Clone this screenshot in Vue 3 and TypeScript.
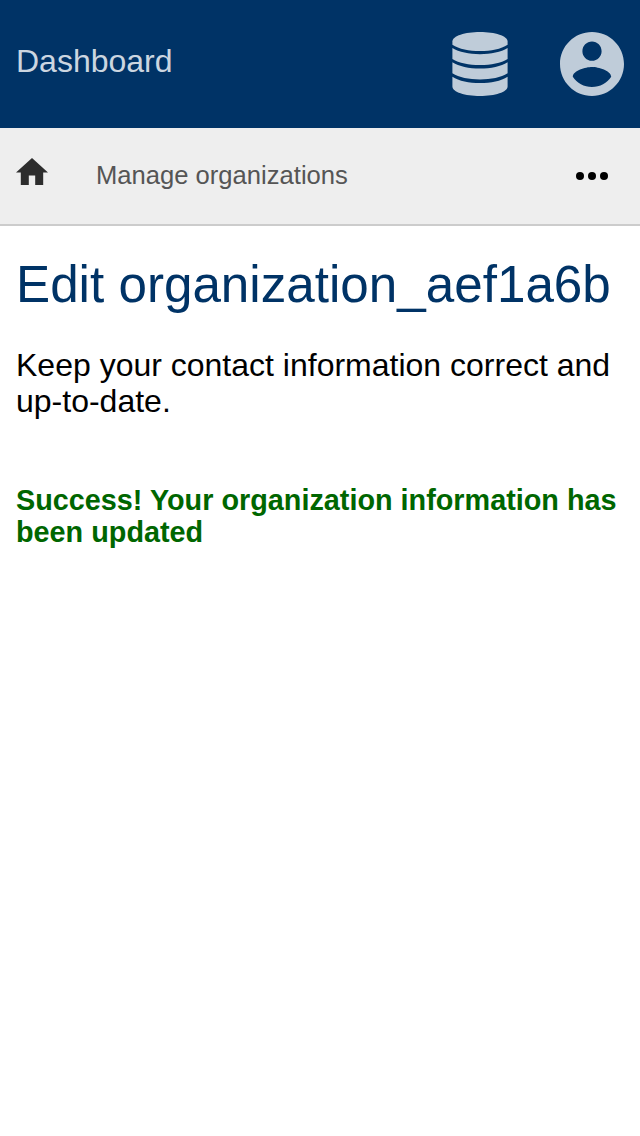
<script setup lang="ts">
const organization: string = 'organization_aef1a6b'
</script>

<template>
  <div class="page">
    <header class="topbar">
      <span class="brand">Dashboard</span>
      <svg class="database" viewBox="0 0 56 64" width="56" height="64">
        <path d="M.4 9.500C.4 4 13 0 28 0s27.600 4 27.600 9.500v3.200C49 17 39 19 28 19S7 17 .4 12.700z" />
        <path d="M.4 16C7 20 17 22.200 28 22.200S49 20 55.600 16V27C49 31 39 33 28 33S7 31 .4 27z" />
        <path d="M.4 30.300C7 34.500 17 36.600 28 36.600s21-2.100 27.600-6.300v11C49 45.500 39 47.500 28 47.500S7 45.500 .4 41.300z" />
        <path d="M.4 44.700C7 49 17 51 28 51s21-2 27.600-6.300v9.800C55.600 60 43 64 28 64S.4 60 .4 54.500z" />
      </svg>
      <svg class="account" viewBox="2 2 20 20" width="64" height="64">
        <path d="M12 2C6.480 2 2 6.480 2 12s4.480 10 10 10 10-4.480 10-10S17.520 2 12 2zm0 3c1.660 0 3 1.340 3 3s-1.340 3-3 3-3-1.340-3-3 1.340-3 3-3zm0 14.200c-2.500 0-4.710-1.280-6-3.220.030-1.990 4-3.080 6-3.080 1.990 0 5.970 1.090 6 3.080-1.290 1.940-3.500 3.220-6 3.220z" />
      </svg>
    </header>
    <nav class="subnav">
      <svg class="home" viewBox="2 3 20 17" width="32" height="27.200"><path d="M10 20v-6h4v6h5v-8h3L12 3 2 12h3v8z" /></svg>
      <span class="crumb">Manage organizations</span>
      <svg class="more" viewBox="0 0 32 8" width="32" height="8"><circle cx="4" cy="4" r="4" /><circle cx="16" cy="4" r="4" /><circle cx="28" cy="4" r="4" /></svg>
    </nav>
    <main>
      <h1>Edit {{ organization }}</h1>
      <p class="intro">Keep your contact information correct and up-to-date.</p>
      <p class="success">Success! Your organization information has been updated</p>
    </main>
  </div>
</template>

<style>
body { margin: 0; background: #fff; }
</style>
<style scoped>
.page { width: 640px; min-height: 1136px; font-family: "Liberation Sans", Arial, sans-serif; color: #000; }
.topbar { height: 128px; box-sizing: border-box; padding: 0 16px; display: flex; align-items: center; background: #003366; color: #ccd6e0; }
.topbar svg { fill: #bfccd9; flex: none; }
.brand { font-size: 32px; line-height: 36px; margin: 0 auto 6px 0; }
.database { margin-right: 52px; }
.subnav { height: 98px; box-sizing: border-box; padding: 0 32px 2px 16px; display: flex; align-items: center; background: #eee; border-bottom: 2px solid #ccc; }
.home { fill: #2d2d2d; margin: 0 48px 6.400px 0; }
.crumb { font-size: 25.600px; line-height: 30px; color: #555; margin-right: auto; }
.more { margin-top: 2px; }
main { padding: 30px 16px 0; }
h1 { margin: 0; font-size: 51.200px; line-height: 58px; font-weight: 400; color: #003366; white-space: nowrap; }
.intro { margin: 33px 0 0; font-size: 32px; line-height: 36px; }
.success { margin: 65px 0 0; font-size: 28.800px; line-height: 32px; font-weight: 700; color: #006600; }
</style>
